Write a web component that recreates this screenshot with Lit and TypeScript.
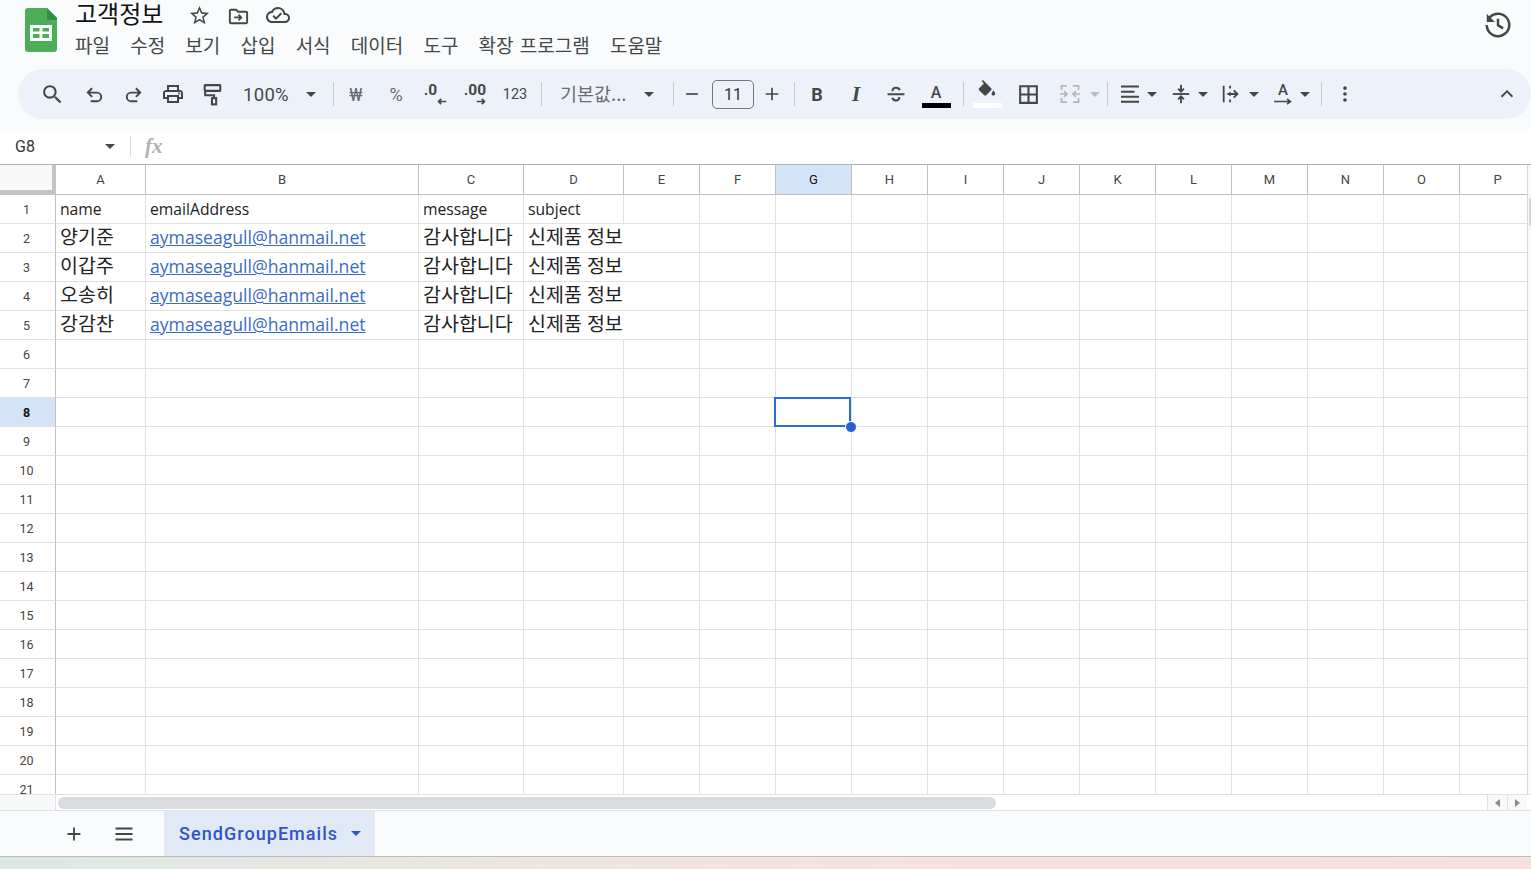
import { LitElement, html, css, svg } from "lit";
import { customElement } from "lit/decorators.js";

const COLS: [string, number][] = [
  ["A", 90], ["B", 273], ["C", 105], ["D", 100], ["E", 76], ["F", 76], ["G", 76], ["H", 76],
  ["I", 76], ["J", 76], ["K", 76], ["L", 76], ["M", 76], ["N", 76], ["O", 76], ["P", 76],
];
const TEMPLATE = `56px ${COLS.map((c) => c[1] + "px").join(" ")}`;
const NAMES = ["양기준", "이갑주", "오송히", "강감찬"];
const MAIL = "aymaseagull@hanmail.net";

const icon = (size: number, body: unknown, cls = "") =>
  html`<svg class="ic ${cls}" width=${size} height=${size} viewBox="0 0 24 24">${body}</svg>`;
const fill = (d: string) => svg`<path d=${d} fill="currentColor" fill-rule="evenodd"></path>`;
const line = (d: string, w = 2) =>
  svg`<path d=${d} fill="none" stroke="currentColor" stroke-width=${w}></path>`;

type Item = { c: number; w: number; t: unknown };
const arrow = (c: number, dis = false): Item => ({
  c, w: 12,
  t: html`<span class="caret ${dis ? "dis" : ""}"></span>`,
});
const sep = (c: number): Item => ({ c, w: 1, t: html`<span class="sep"></span>` });

const ITEMS: Item[] = [
  { c: 52, w: 26, t: icon(25, fill("M15.5 14h-.79l-.28-.27A6.47 6.47 0 0 0 16 9.5 6.5 6.5 0 1 0 9.5 16c1.61 0 3.09-.59 4.23-1.57l.27.28v.79l5 4.99L20.49 19l-4.99-5zm-6 0C7.01 14 5 11.99 5 9.5S7.01 5 9.5 5 14 7.01 14 9.5 11.99 14 9.5 14z")) },
  { c: 94, w: 24, t: icon(23, line("M9.5 5.5 5 10l4.5 4.5M5 10h9.5a4.5 4.5 0 0 1 0 9H8")) },
  { c: 133, w: 24, t: icon(23, line("M14.5 5.5 19 10l-4.5 4.5M19 10H9.5a4.5 4.5 0 0 0 0 9H16")) },
  { c: 173, w: 24, t: icon(24, svg`${fill("M19 8h-1V3H6v5H5c-1.66 0-3 1.34-3 3v6h4v4h12v-4h4v-6c0-1.66-1.34-3-3-3zM8 5h8v3H8V5zm8 12v2H8v-4h8v2zm2-2v-2H6v2H4v-4c0-.55.45-1 1-1h14c.55 0 1 .45 1 1v4h-2z")}<circle cx="18" cy="11.5" r="1" fill="currentColor"></circle>`) },
  { c: 212, w: 24, t: icon(25, svg`<rect x="4.5" y="3" width="15" height="5.5" rx=".5" fill="none" stroke="currentColor" stroke-width="2"></rect>${line("M5 8.5v4.2h8.5v2.8")}<rect x="11.5" y="15.5" width="4" height="6" fill="none" stroke="currentColor" stroke-width="2"></rect>`) },
  { c: 266, w: 50, t: html`<span class="zoomtxt">100%</span>` },
  arrow(311), sep(333),
  { c: 356, w: 20, t: html`<span class="sym">₩</span>` },
  { c: 396, w: 20, t: html`<span class="sym">%</span>` },
  { c: 435, w: 26, t: html`<span class="dec one">.0</span><svg class="decarrow left" width="10" height="9" viewBox="0 0 13 9"><path d="M12 4.5H2M5.5 1 2 4.5 5.5 8" fill="none" stroke="currentColor" stroke-width="2.2"></path></svg>` },
  { c: 475, w: 26, t: html`<span class="dec">.00</span><svg class="decarrow right" width="10" height="9" viewBox="0 0 13 9"><path d="M1 4.5h10M7.5 1 11 4.5 7.5 8" fill="none" stroke="currentColor" stroke-width="2.2"></path></svg>` },
  { c: 515, w: 26, t: html`<span class="num123">123</span>` },
  sep(541),
  { c: 593, w: 66, t: html`<span class="fontname">기본값...</span>` },
  arrow(649), sep(673),
  { c: 692, w: 20, t: icon(20, line("M5 12h14")) },
  { c: 733, w: 42, t: html`<span class="sizebox">11</span>` },
  { c: 772, w: 20, t: icon(20, line("M4.5 12h15M12 4.5v15")) },
  sep(794),
  { c: 817, w: 20, t: html`<span class="bold">B</span>` },
  { c: 856, w: 20, t: html`<span class="ital">I</span>` },
  { c: 896, w: 24, t: icon(24, line("M3.5 12.2h17M8.5 9.2c0-2.2 1.5-3.4 3.6-3.4 1.9 0 3.2.9 3.6 2.5M15.3 15c.2 2-1.2 3.4-3.3 3.4-2 0-3.3-1-3.6-2.6")) },
  { c: 936, w: 30, t: html`<span class="colorbtn"><span class="a">A</span><span class="bar black"></span></span>` },
  sep(963),
  { c: 987, w: 30, t: html`<span class="colorbtn">${icon(22, fill("M16.56 8.94 7.62 0 6.21 1.41l2.38 2.38-5.15 5.15c-.59.59-.59 1.54 0 2.12l5.5 5.5c.29.29.68.44 1.06.44s.77-.15 1.06-.44l5.5-5.5c.59-.58.59-1.53 0-2.12zM19 11.5s-2 2.17-2 3.5c0 1.1.9 2 2 2s2-.9 2-2c0-1.33-2-3.5-2-3.5z"), "fillic")}<span class="bar white"></span></span>` },
  { c: 1028, w: 24, t: icon(25, fill("M3 3v18h18V3H3zm8 16H5v-6h6v6zm0-8H5V5h6v6zm8 8h-6v-6h6v6zm0-8h-6V5h6v6z")) },
  { c: 1070, w: 24, t: icon(24, line("M3.5 8V3.8H9M3.5 16v4.2H9M15 3.8h5.5V8M15 20.2h5.5V16M2 12h7M6 9l3 3-3 3M22 12h-7M18 9l-3 3 3 3", 1.7), "dis") },
  arrow(1095, true), sep(1107),
  { c: 1130, w: 24, t: icon(24, line("M3 4.5h18M3 9.7h13.5M3 14.7h18M3 19.8h18")) },
  arrow(1152),
  { c: 1181, w: 22, t: icon(22, svg`${line("M3 12h18")}${line("M12 2v7M8.8 6.2 12 9.5l3.2-3.3")}${line("M12 22v-7M8.8 17.8 12 14.5l3.2 3.3")}`) },
  arrow(1203),
  { c: 1231, w: 22, t: icon(22, svg`${line("M4 3v18")}${line("M11 3v3M11 10v4M11 18v3")}${line("M8 12h11M15 8l4 4-4 4")}`) },
  arrow(1254),
  { c: 1283, w: 22, t: html`<span class="rot"><span class="rota">A</span><svg width="20" height="7" viewBox="0 0 20 7"><path d="M1 3.5h16M14 .8 17.5 3.5 14 6.2" fill="none" stroke="currentColor" stroke-width="1.6"></path></svg></span>` },
  arrow(1305), sep(1321),
  { c: 1345, w: 20, t: icon(22, svg`<circle cx="12" cy="5.5" r="2" fill="currentColor"></circle><circle cx="12" cy="12" r="2" fill="currentColor"></circle><circle cx="12" cy="18.5" r="2" fill="currentColor"></circle>`) },
  { c: 1507, w: 24, t: icon(22, line("M6 15l6-6 6 6")) },
];

@customElement("app-root")
export class AppRoot extends LitElement {
  static styles = css`
    :host {
      display: flex;
      flex-direction: column;
      width: 100%;
      height: 869px;
      overflow: hidden;
      background: #fff;
      font-family: "Noto Sans CJK KR", Roboto, sans-serif;
      color: #202124;
    }
    .top { background: #f9fbfd; height: 129px; flex: none; }
    .head { height: 69px; display: flex; position: relative; }
    .logo { margin: 8px 0 0 25px; flex: none; }
    .titles { margin-left: 18px; display: flex; flex-direction: column; }
    .titlerow { display: flex; align-items: center; height: 28px; }
    .title { font-size: 24px; line-height: 24px; color: #111; width: 88px; margin-top: -3px; white-space: nowrap; }
    .tic { display: flex; align-items: center; justify-content: center; width: 24px; color: #444746; margin-top: 2px; }
    .star { margin-left: 24px; }
    .folder { margin-left: 15px; margin-top: 4px; }
    .cloud { margin-left: 16px; }
    .menu { display: flex; gap: 20.2px; margin-top: 4px; font-size: 19px; line-height: 26px; color: #444746; white-space: nowrap; }
    .menu .wide { word-spacing: 2px; }
    .history { margin: 10px 18px 0 auto; color: #444746; }
    .ic { display: block; flex: none; color: #444746; }
    .pill {
      margin-left: 18px;
      height: 50px;
      border-radius: 25px;
      background: #edf2fa;
      display: flex;
      align-items: center;
    }
    .ti { display: flex; align-items: center; justify-content: center; flex: none; height: 50px; position: relative; color: #444746; }
    .caret { width: 0; height: 0; border-left: 5px solid transparent; border-right: 5px solid transparent; border-top: 5px solid #444746; }
    .caret.dis { border-top-color: #b8bbbf; }
    .ic.dis { color: #b3b5b8; }
    .sep { width: 1px; height: 24px; background: #c7c7c7; display: block; }
    .zoomtxt { font: 400 18.5px Roboto, sans-serif; letter-spacing: .3px; color: #444746; white-space: nowrap; margin-top: 1px; }
    .sym { font: 400 18px Roboto, sans-serif; color: #6a6d70; }
    .dec { font: 700 15.5px Roboto, sans-serif; color: #444746; position: absolute; top: 13px; left: 0; right: 0; text-align: center; line-height: 16px; white-space: nowrap; }
    .dec.one { right: 8px; left: -1px; }
    .decarrow { position: absolute; top: 28px; color: #444746; }
    .decarrow.left { left: 15px; }
    .decarrow.right { left: 14px; }
    .num123 { font: 400 14.5px Roboto, sans-serif; color: #444746; }
    .fontname { font-size: 18.5px; color: #6a6d70; white-space: nowrap; line-height: 24px; margin-top: -3px; width: 66px; }
    .sizebox { box-sizing: border-box; width: 42px; height: 29px; border: 1px solid #747775; border-radius: 5px; display: flex; align-items: center; justify-content: center; font: 400 16px Roboto, sans-serif; color: #333; }
    .bold { font: 700 18px Roboto, sans-serif; color: #444746; }
    .ital { font: italic 700 21px "Liberation Serif", serif; color: #444746; }
    .colorbtn { display: flex; flex-direction: column; align-items: center; width: 30px; }
    .colorbtn .a { font: 500 16px/19px Roboto, sans-serif; color: #444746; margin-top: 3px; }
    .colorbtn .fillic { margin: -1px 0 0; }
    .bar { display: block; width: 29px; height: 5px; margin-top: 1px; }
    .bar.black { background: #000; }
    .bar.white { background: #fff; }
    .rot { display: flex; flex-direction: column; align-items: center; color: #444746; }
    .rota { font: 500 15px/15px Roboto, sans-serif; }
    .namebar { height: 35px; flex: none; display: flex; align-items: center; background: #fff; }
    .cellref { font: 400 16px Roboto, sans-serif; color: #333; margin-left: 15px; width: 90px; }
    .namebar .caret { margin-bottom: 1px; }
    .nsep { width: 1px; height: 21px; background: #dadce0; margin-left: 15px; }
    .fx { font: italic 700 21px/21px "Liberation Serif", serif; color: #b0b2b5; margin-left: 14px; }
    .grid { flex: none; height: 631px; overflow: hidden; border-top: 1px solid #b4b4b4; border-bottom: 1px solid #e1e1e1; position: relative; box-sizing: border-box; }
    .row { display: grid; height: 29px; grid-template-rows: 29px; }
    .row.hd { height: 30px; grid-template-rows: 30px; }
    .c { box-sizing: border-box; border-right: 1px solid #e1e1e1; border-bottom: 1px solid #e1e1e1; padding-left: 4px; font: 400 15.7px/28px "Open Sans", "Noto Sans CJK KR", sans-serif; color: #222; white-space: nowrap; position: relative; }
    .c.open { border-right-color: transparent; }
    .c.ko { font-size: 19.5px; line-height: 25px; }
    .c.link { font-size: 17.6px; line-height: 27px; }
    .c a { color: #3c6bc4; text-decoration: underline; }
    .hc { box-sizing: border-box; border-right: 1px solid #c0c0c0; border-bottom: 1px solid #c0c0c0; background: #fff; font: 400 13px/29px Roboto, sans-serif; color: #444; text-align: center; }
    .hc.sel { background: #d3e3f8; color: #111; }
    .corner { box-sizing: border-box; background: #f8f9fa; border-right: 4px solid #c4c4c4; border-bottom: 5px solid #c4c4c4; }
    .rh { box-sizing: border-box; border-right: 1px solid #c0c0c0; border-bottom: 1px solid #e1e1e1; background: #fff; font: 400 12.5px/29px Roboto, sans-serif; color: #444; text-align: center; padding-right: 2px; }
    .rh.sel { background: #d3e3f8; color: #111; font-weight: 700; }
    .selbox { position: absolute; left: -2px; top: -1px; right: 0; bottom: -1px; border: 2px solid #2f6bd6; z-index: 2; }
    .handle { position: absolute; right: -8px; bottom: -8px; width: 10px; height: 10px; border-radius: 50%; background: #2a5fd0; border: 1px solid #fff; }
    .vstrip { position: absolute; right: 0; top: 0; bottom: 0; width: 4px; box-sizing: border-box; background: #f8f9fa; border-left: 1px solid #d8d8d8; }
    .vthumb { position: absolute; right: 0; top: 33px; width: 2px; height: 28px; background: #d5d7db; }
    .hscroll { height: 15px; flex: none; display: flex; background: #fff; border-bottom: 1px solid #e1e3e1; position: relative; box-sizing: content-box; }
    .hleft { width: 56px; background: #f8f9fa; border-right: 1px solid #e1e1e1; box-sizing: border-box; flex: none; }
    .thumb { width: 938px; height: 12px; margin: 2px 0 0 2px; border-radius: 6px; background: #dadce0; flex: none; }
    .hbtns { margin-left: auto; display: flex; margin-right: 4px; }
    .hbtn { width: 19px; background: #f8f9fa; border-left: 1px solid #e1e1e1; display: flex; align-items: center; justify-content: center; }
    .tri-l { border-top: 4px solid transparent; border-bottom: 4px solid transparent; border-right: 5px solid #8a8a8a; }
    .tri-r { border-top: 4px solid transparent; border-bottom: 4px solid transparent; border-left: 5px solid #8a8a8a; }
    .tabs { height: 45px; flex: none; background: #f9fbfd; display: flex; align-items: stretch; border-bottom: 1px solid #bdbdbd; }
    .tb { display: flex; align-items: center; justify-content: center; width: 24px; color: #444746; flex: none; }
    .tb.add { margin-left: 62px; }
    .tb.all { margin-left: 26px; }
    .tab { margin-left: 28px; width: 211px; background: #e1e9f7; display: flex; align-items: center; color: #2f55c8; font: 500 18px Roboto, sans-serif; letter-spacing: 1.05px; box-sizing: border-box; padding-left: 15px; }
    .tab .caret { border-top-color: #2f55c8; margin-left: 13px; }
    .desk { flex: 1; background: linear-gradient(90deg, #dce8e2 0%, #eee6e0 35%, #f7e2e0 60%, #f6e1df 100%); }
  `;

  private toolbar() {
    let prev = 18;
    return ITEMS.map((it) => {
      const left = it.c - it.w / 2;
      const m = left - prev;
      prev = left + it.w;
      return html`<div class="ti" style="width:${it.w}px;margin-left:${m}px">${it.t}</div>`;
    });
  }

  private renderRow(r: number) {
    const isData = r <= 5;
    return html`<div class="row" style="grid-template-columns:${TEMPLATE}">
      <div class="rh ${r === 8 ? "sel" : ""}">${r}</div>
      ${COLS.map(([n]) => this.cell(n, r, isData))}
    </div>`;
  }

  private cell(col: string, r: number, isData: boolean) {
    if (r === 1 && col === "A") return html`<div class="c">name</div>`;
    if (r === 1 && col === "B") return html`<div class="c">emailAddress</div>`;
    if (r === 1 && col === "C") return html`<div class="c">message</div>`;
    if (r === 1 && col === "D") return html`<div class="c">subject</div>`;
    if (isData && r > 1) {
      if (col === "A") return html`<div class="c ko">${NAMES[r - 2]}</div>`;
      if (col === "B") return html`<div class="c link"><a>${MAIL}</a></div>`;
      if (col === "C") return html`<div class="c ko">감사합니다</div>`;
      if (col === "D") return html`<div class="c ko open">신제품 정보</div>`;
    }
    if (col === "G" && r === 8)
      return html`<div class="c"><div class="selbox"><div class="handle"></div></div></div>`;
    return html`<div class="c"></div>`;
  }

  render() {
    const rows = Array.from({ length: 21 }, (_, i) => i + 1);
    return html`
      <div class="top">
        <div class="head">
          <svg class="logo" width="32" height="44" viewBox="0 0 32 44">
            <path d="M3 0h19l10 10v31a3 3 0 0 1-3 3H3a3 3 0 0 1-3-3V3a3 3 0 0 1 3-3z" fill="#4caf57"></path>
            <path d="M22 0l10 10v2H24a2 2 0 0 1-2-2z" fill="#2f8f45"></path>
            <path fill="#fff" fill-rule="evenodd" d="M5 17h22v16H5zM8 20v3.5h6.5V20zm9.5 0v3.5H24V20zM8 26v4h6.5v-4zm9.5 0v4H24v-4z"></path>
          </svg>
          <div class="titles">
            <div class="titlerow">
              <span class="title">고객정보</span>
              <span class="tic star">${icon(23, fill("M22 9.24l-7.19-.62L12 2 9.19 8.63 2 9.24l5.46 4.73L5.82 21 12 17.27 18.18 21l-1.63-7.03L22 9.24zM12 15.4l-3.76 2.27 1-4.28-3.32-2.88 4.38-.38L12 6.1l1.71 4.04 4.38.38-3.32 2.88 1 4.28L12 15.4z"))}</span>
              <span class="tic folder">${icon(23, svg`${fill("M20 6h-8l-2-2H4c-1.1 0-2 .9-2 2v12c0 1.1.9 2 2 2h16c1.1 0 2-.9 2-2V8c0-1.1-.9-2-2-2zm0 12H4V6h5.17l2 2H20v10z")}${line("M7.5 13h7M12 10l3 3-3 3", 1.8)}`)}</span>
              <span class="tic cloud">${icon(24, fill("M19.35 10.04A7.49 7.49 0 0 0 12 4C9.11 4 6.6 5.64 5.35 8.04A5.994 5.994 0 0 0 0 14c0 3.31 2.69 6 6 6h13c2.76 0 5-2.24 5-5 0-2.64-2.05-4.78-4.65-4.96zM19 18H6c-2.21 0-4-1.79-4-4 0-2.05 1.53-3.76 3.56-3.97l1.07-.11.5-.95A5.469 5.469 0 0 1 12 6c2.62 0 4.88 1.86 5.39 4.43l.3 1.5 1.53.11A2.98 2.98 0 0 1 22 15c0 1.65-1.35 3-3 3zm-9-3.82l-2.09-2.09L6.5 13.5 10 17l6.01-6.01-1.41-1.41z"))}</span>
            </div>
            <div class="menu">
              <span>파일</span><span>수정</span><span>보기</span><span>삽입</span><span>서식</span><span>데이터</span><span>도구</span><span class="wide">확장 프로그램</span><span>도움말</span>
            </div>
          </div>
          <div class="history">${icon(30, svg`${fill("M12 2a10 10 0 0 0-7.1 2.9L3 3v6.5h6.5L6.3 6.3A8 8 0 1 1 4 12H2a10 10 0 1 0 10-10z")}${fill("M11 7h2v4.6l3.6 2.2-1 1.7L11 12.7z")}`)}</div>
        </div>
        <div class="pill">${this.toolbar()}</div>
      </div>
      <div class="namebar">
        <span class="cellref">G8</span>
        <span class="caret"></span>
        <span class="nsep"></span>
        <span class="fx">fx</span>
      </div>
      <div class="grid">
        <div class="row hd" style="grid-template-columns:${TEMPLATE}">
          <div class="corner"></div>
          ${COLS.map(([n]) => html`<div class="hc ${n === "G" ? "sel" : ""}">${n}</div>`)}
        </div>
        ${rows.map((r) => this.renderRow(r))}
        <div class="vstrip"><div class="vthumb"></div></div>
      </div>
      <div class="hscroll">
        <div class="hleft"></div>
        <div class="thumb"></div>
        <div class="hbtns">
          <div class="hbtn"><span class="tri-l"></span></div>
          <div class="hbtn"><span class="tri-r"></span></div>
        </div>
      </div>
      <div class="tabs">
        <span class="tb add">${icon(22, line("M5 12h14M12 5v14"))}</span>
        <span class="tb all">${icon(24, line("M3.5 6.5h17M3.5 12h17M3.5 17.5h17"))}</span>
        <div class="tab">SendGroupEmails<span class="caret"></span></div>
      </div>
      <div class="desk"></div>
    `;
  }
}
